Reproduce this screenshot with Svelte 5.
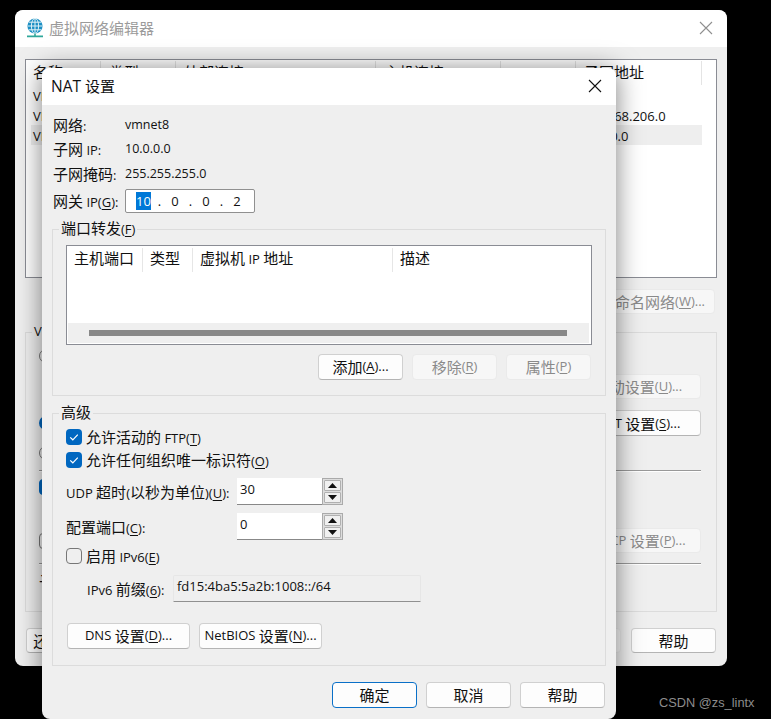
<script lang="ts">
  // "&X" marks the underlined access key. Chinese runs get a larger size than the Latin ones,
  // the way the Windows UI font pairing looks.
  function parts(text: string) {
    return text
      .split(/(&.|[\u4e00-\u9fff]+)/)
      .filter(Boolean)
      .map((t) => {
        if (t[0] === '&') return { t: t[1], k: 'lat mn' };
        return { t, k: /[\u4e00-\u9fff]/.test(t) ? 'cjk' : 'lat' };
      });
  }

  const networks = [
    { name: 'VMnet0', type: '桥接模式', ext: '自动桥接', host: '-', dhcp: '-', subnet: '-' },
    { name: 'VMnet1', type: '仅主机模式', ext: '-', host: '已连接', dhcp: '已启用', subnet: '192.168.206.0' },
    { name: 'VMnet8', type: 'NAT 模式', ext: 'NAT 模式', host: '已连接', dhcp: '已启用', subnet: '10.0.0.0' }
  ];
  const portCols = ['主机端口', '类型', '虚拟机 IP 地址', '描述'];
  const listCols = ['名称', '类型', '外部连接', '主机连接', 'DHCP', '子网地址'];
</script>

{#snippet txt(s: string)}{#each parts(s) as p}<span class={p.k}>{p.t}</span>{/each}{/snippet}

{#snippet check(on: boolean, label: string)}
  <div class="checkrow">
    <span class="box" class:on>
      {#if on}
        <svg viewBox="0 0 16 16" width="16" height="16"><path d="M4.2 8.4 6.8 10.8 11.8 5.6" fill="none" stroke="#fff" stroke-width="1.2" /></svg>
      {/if}
    </span>
    <span>{@render txt(label)}</span>
  </div>
{/snippet}

{#snippet spinner(value: string)}
  <div class="spin">
    <div class="spinval lat">{value}</div>
    <div class="spinbtns">
      <span class="arrow"><svg viewBox="0 0 9 5" width="9" height="5"><path d="M4.5 0 9 5H0z" fill="#111" /></svg></span>
      <span class="arrow"><svg viewBox="0 0 9 5" width="9" height="5"><path d="M0 0H9L4.5 5z" fill="#111" /></svg></span>
    </div>
  </div>
{/snippet}

{#snippet closeX(color: string)}
  <svg viewBox="0 0 14 14" width="14" height="14"><path d="M1 1 13 13M13 1 1 13" stroke={color} stroke-width="1.1" fill="none" /></svg>
{/snippet}

<div class="desk">
  <!-- the editor window behind the dialog -->
  <section class="win back">
    <header class="title">
      <svg class="globe" viewBox="0 0 18 20" width="18" height="20">
        <circle cx="9" cy="8" r="7.6" fill="#1c8fc4" />
        <path d="M1.6 8H16.4M2.8 4.2H15.2M2.8 11.8H15.2M9 .4V15.6" stroke="#dff1f6" stroke-width="1" fill="none" />
        <ellipse cx="9" cy="8" rx="3.6" ry="7.6" stroke="#dff1f6" stroke-width="1" fill="none" />
        <path d="M9 15.5V18M1 18.4H17" stroke="#2fa79a" stroke-width="1.6" fill="none" />
      </svg>
      <span class="backtitle">虚拟网络编辑器</span>
      <span class="x">{@render closeX('#8f8f8f')}</span>
    </header>
    <div class="backbody">
      <div class="netlist">
        <div class="netrow nethead">
          {#each listCols as c}<span>{@render txt(c)}</span>{/each}
        </div>
        {#each networks as n, i}
          <div class="netrow" class:sel={i === 2}>
            <span class="lat">{n.name}</span>
            <span>{@render txt(n.type)}</span>
            <span>{@render txt(n.ext)}</span>
            <span>{@render txt(n.host)}</span>
            <span>{@render txt(n.dhcp)}</span>
            <span class="lat">{n.subnet}</span>
          </div>
        {/each}
      </div>
      <div class="btnrow rename">
        <button class="btn off wide h25">{@render txt('重命名网络(&W)...')}</button>
      </div>
      <fieldset class="group vminfo">
        <legend>{@render txt('VMnet 信息')}</legend>
        <div class="vrow r1"><i class="radio"></i></div>
        <div class="vrow r2"><button class="btn off wide h25">{@render txt('自动设置(&U)...')}</button></div>
        <div class="vrow r3"><i class="radio on"></i><button class="btn wide">{@render txt('NAT 设置(&S)...')}</button></div>
        <div class="vrow r4"><i class="radio"></i></div>
        <div class="vline"></div>
        <div class="vrow r5"><i class="mini on"></i></div>
        <div class="vrow r6"><i class="mini"></i><button class="btn off wide h25">{@render txt('DHCP 设置(&P)...')}</button></div>
        <div class="vline l2"></div>
        <div class="vrow r7">{@render txt('子网')}</div>
      </fieldset>
      <div class="backfoot">
        <button class="btn">{@render txt('还原默认设置(&R)')}</button>
        <button class="btn off push">{@render txt('应用(&A)')}</button>
        <button class="btn">{@render txt('帮助')}</button>
      </div>
    </div>
  </section>

  <!-- NAT dialog on top -->
  <section class="win front">
    <header class="title dtitle">
      <span>{@render txt('NAT 设置')}</span>
      <span class="x dx">{@render closeX('#111')}</span>
    </header>
    <div class="body">
      <dl class="info">
        <dt>{@render txt('网络:')}</dt>
        <dd>vmnet8</dd>
        <dt>{@render txt('子网 IP:')}</dt>
        <dd>10.0.0.0</dd>
        <dt>{@render txt('子网掩码:')}</dt>
        <dd>255.255.255.0</dd>
      </dl>
      <div class="gateway">
        <span class="gwlabel">{@render txt('网关 IP(&G):')}</span>
        <div class="ipbox lat">
          <span class="seg hl">10</span><span class="dot">.</span>
          <span class="seg">0</span><span class="dot">.</span>
          <span class="seg">0</span><span class="dot">.</span>
          <span class="seg">2</span>
        </div>
      </div>

      <fieldset class="group ports">
        <legend>{@render txt('端口转发(&F)')}</legend>
        <div class="table">
          <div class="thead">
            {#each portCols as c}<span class="th">{@render txt(c)}</span>{/each}
          </div>
          <div class="tbody"></div>
          <div class="hscroll"><div class="thumb"></div></div>
        </div>
        <div class="btnrow portbtns">
          <button class="btn">{@render txt('添加(&A)...')}</button>
          <button class="btn off">{@render txt('移除(&R)')}</button>
          <button class="btn off">{@render txt('属性(&P)')}</button>
        </div>
      </fieldset>

      <fieldset class="group adv">
        <legend>{@render txt('高级')}</legend>
        <div class="checks">
          {@render check(true, '允许活动的 FTP(&T)')}
          {@render check(true, '允许任何组织唯一标识符(&O)')}
        </div>
        <div class="spinrow first">
          <span class="spinlabel">{@render txt('UDP 超时(以秒为单位)(&U):')}</span>
          {@render spinner('30')}
        </div>
        <div class="spinrow">
          <span class="spinlabel">{@render txt('配置端口(&C):')}</span>
          {@render spinner('0')}
        </div>
        <div class="v6check">{@render check(false, '启用 IPv6(&E)')}</div>
        <div class="prefix">
          <span class="prefixlabel">{@render txt('IPv6 前缀(&6):')}</span>
          <div class="prefixval lat">fd15:4ba5:5a2b:1008::/64</div>
        </div>
        <div class="advbtns">
          <button class="btn w123">{@render txt('DNS 设置(&D)...')}</button>
          <button class="btn w123">{@render txt('NetBIOS 设置(&N)...')}</button>
        </div>
      </fieldset>

      <div class="btnrow foot">
        <button class="btn primary">{@render txt('确定')}</button>
        <button class="btn">{@render txt('取消')}</button>
        <button class="btn">{@render txt('帮助')}</button>
      </div>
    </div>
  </section>

  <div class="mark">CSDN @zs_lintx</div>
</div>

<style>
  :global(body) {
    margin: 0;
    background: #000;
  }
  .desk {
    position: relative;
    width: 771px;
    height: 719px;
    overflow: hidden;
    background: #000;
    font-family: 'Open Sans', 'Noto Sans CJK SC', sans-serif;
    font-size: 13px;
    color: #111;
  }
  .lat {
    font-size: 13px;
    white-space: pre;
  }
  .mn {
    text-decoration: underline;
    text-underline-offset: 2px;
  }
  .cjk {
    font-family: 'Noto Sans CJK SC', sans-serif;
    font-size: 15px;
    font-weight: 400;
  }

  .win {
    position: absolute;
    display: flex;
    flex-direction: column;
    background: #efefef;
    border-radius: 8px;
    overflow: hidden;
  }
  .back {
    left: 15px;
    top: 10px;
    width: 712px;
    height: 656px;
  }
  .front {
    left: 42px;
    top: 68px;
    width: 574px;
    height: 651px;
    overflow: visible;
    box-shadow: 0 2px 26px rgba(0, 0, 0, 0.5);
  }
  .title {
    flex: none;
    height: 37px;
    box-sizing: border-box;
    padding: 0 0 2px 11px;
    display: flex;
    align-items: center;
    background: #fff;
    border-radius: 8px 8px 0 0;
  }
  .dtitle {
    padding-left: 9px;
    font-size: 15px;
  }
  .dtitle .lat {
    font-size: 15.5px;
  }
  .globe {
    margin-right: 5px;
  }
  .backtitle {
    font-family: 'Noto Sans CJK SC', sans-serif;
    font-size: 15px;
    color: #9b9b9b;
  }
  .x {
    margin-left: auto;
    margin-right: 14px;
    display: flex;
  }

  .backbody {
    flex: 1;
    display: flex;
    flex-direction: column;
    padding: 12px 10px 0;
  }
  .netlist {
    height: 219px;
    box-sizing: border-box;
    background: #fff;
    border: 1px solid #8a8c94;
    padding: 1px 14px 0 5px;
  }
  .netrow {
    display: grid;
    grid-template-columns: 70px 75px 200px 125px 75px 1fr;
    height: 20px;
    align-items: center;
  }
  .netrow > span {
    padding-left: 5px;
    white-space: nowrap;
  }
  .netrow > span:first-child {
    padding-left: 2px;
  }
  .nethead {
    height: 24px;
  }
  .nethead > span {
    height: 24px;
    padding-left: 8px;
    border-right: 1px solid #e4e4e4;
    line-height: 22px;
  }
  .netrow.sel {
    background: #eee;
  }
  .rename {
    margin-top: 11px;
    padding-right: 2px;
  }
  .group {
    margin: 0;
    padding: 0;
    min-width: 0;
    border: 1px solid #dcdcdc;
  }
  .group legend {
    margin-left: -7px;
    padding: 0 2px;
    line-height: 12px;
    height: 16px;
  }
  .vminfo {
    margin-top: 10px;
    height: 288px;
    box-sizing: border-box;
    padding: 0 15px 0 13px;
  }
  .vrow {
    display: flex;
    align-items: center;
    justify-content: space-between;
  }
  .vrow.r1 { height: 16px; margin-top: 8px; }
  .vrow.r2 { justify-content: flex-end; margin-top: 10px; }
  .vrow.r3 { margin-top: 11px; }
  .vrow.r4 { height: 16px; margin-top: 9px; }
  .vline {
    height: 1px;
    margin-top: 9px;
    background: #999;
    box-shadow: 0 1px 0 #fff;
  }
  .vline.l2 { margin-top: 10px; }
  .vrow.r5 { height: 16px; margin-top: 8px; }
  .vrow.r6 { margin-top: 33px; }
  .vrow.r7 { margin-top: 6px; }
  .radio {
    display: block;
    width: 14px;
    height: 14px;
    box-sizing: border-box;
    border: 1px solid #777;
    border-radius: 50%;
  }
  .radio.on {
    border: 4px solid #0067c0;
  }
  .mini {
    display: block;
    width: 16px;
    height: 16px;
    box-sizing: border-box;
    border: 1px solid #777;
    border-radius: 4px;
  }
  .mini.on {
    background: #0067c0;
    border-color: #0067c0;
  }
  .backfoot {
    margin-top: 16px;
    display: flex;
    gap: 10px;
    padding: 0 1px;
  }
  .backfoot .btn {
    width: 85px;
    height: 25px;
  }
  .backfoot .btn:first-child {
    width: 120px;
  }
  .backfoot .push {
    margin-left: auto;
  }

  .btn {
    box-sizing: border-box;
    width: 85px;
    height: 26px;
    padding: 0;
    background: #fdfdfd;
    border: 1px solid #d0d0d0;
    border-bottom-color: #b4b4b4;
    border-radius: 4px;
    color: #111;
    font: inherit;
    line-height: 1;
    white-space: nowrap;
    display: flex;
    align-items: center;
    justify-content: center;
  }
  .btn.off {
    background: #f7f7f7;
    border-color: #eaeaea;
    color: #8a8a8a;
  }
  .btn.primary {
    border: 1.5px solid #0a70c8;
  }
  .btn.wide {
    width: 125px;
  }
  .btn.h25 {
    height: 25px;
  }
  .btn.w123 {
    width: 123px;
  }
  .btnrow {
    display: flex;
    justify-content: flex-end;
    gap: 9px;
  }

  .body {
    flex: 1;
    display: flex;
    flex-direction: column;
    padding: 7px 10px 0;
  }
  .info {
    margin: 0 0 0 1px;
    display: grid;
    grid-template-columns: 72px 1fr;
    grid-auto-rows: 24.5px;
    align-items: center;
  }
  .info dd {
    margin: 0;
    font-size: 12.5px;
  }
  .gateway {
    display: flex;
    align-items: center;
    margin: 3px 0 0 1px;
  }
  .gwlabel {
    width: 72px;
  }
  .ipbox {
    box-sizing: border-box;
    width: 130px;
    height: 24px;
    display: flex;
    align-items: center;
    padding-left: 10px;
    background: #fff;
    border: 1px solid #909090;
    border-radius: 2px;
  }
  .seg {
    width: 16px;
    text-align: center;
  }
  .seg.hl {
    width: 15px;
    margin-right: 1px;
    background: #0078d7;
    color: #fff;
  }
  .dot {
    width: 15px;
    text-align: center;
  }
  .ports {
    margin-top: 9px;
    height: 174px;
    box-sizing: border-box;
    padding: 0 13px;
  }
  .table {
    height: 100px;
    box-sizing: border-box;
    display: flex;
    flex-direction: column;
    margin-top: 7px;
    background: #fff;
    border: 1px solid #8a8c94;
  }
  .thead {
    flex: none;
    display: grid;
    grid-template-columns: 76px 50px 200px 1fr;
    height: 24px;
    margin-top: 2px;
  }
  .th {
    padding-left: 7px;
    border-right: 1px solid #e6e6e6;
    line-height: 20px;
    white-space: nowrap;
  }
  .th:last-child {
    border-right: none;
  }
  .tbody {
    flex: 1;
  }
  .hscroll {
    flex: none;
    height: 20px;
    margin: 0 2px 1px 1px;
    background: #efefef;
    display: flex;
    align-items: center;
    padding: 0 22px 0 21px;
  }
  .thumb {
    flex: 1;
    height: 6px;
    background: #888;
  }
  .portbtns {
    margin-top: 9px;
    padding-right: 1px;
  }
  .adv {
    margin-top: 10px;
    height: 260px;
    box-sizing: border-box;
    padding: 0 13px;
  }
  .checks {
    display: flex;
    flex-direction: column;
    gap: 7px;
    margin-top: 7px;
  }
  .checkrow {
    display: flex;
    align-items: center;
    gap: 4px;
    height: 16px;
  }
  .box {
    flex: none;
    box-sizing: border-box;
    width: 16px;
    height: 16px;
    border: 1px solid #777;
    border-radius: 4px;
    overflow: hidden;
  }
  .box.on {
    border: none;
    background: #0067c0;
  }
  .box svg {
    display: block;
  }
  .spinrow {
    display: flex;
    align-items: center;
    margin-top: 8px;
  }
  .spinrow.first {
    margin-top: 10px;
  }
  .spinlabel {
    width: 171px;
    white-space: nowrap;
  }
  .spin {
    display: flex;
    height: 27px;
  }
  .spinval {
    box-sizing: border-box;
    width: 85px;
    padding: 0 0 0 3px;
    line-height: 22px;
    background: #fff;
    border-bottom: 1px solid #888;
  }
  .spinbtns {
    box-sizing: border-box;
    width: 21px;
    height: 27px;
    display: flex;
    flex-direction: column;
    gap: 1px;
    padding: 1px;
    border: 1px solid #aaa;
    background: #ddd;
  }
  .arrow {
    flex: 1;
    display: flex;
    align-items: center;
    justify-content: center;
    background: #f0f0f0;
    border: 1px solid #b0b0b0;
    border-radius: 1px;
  }
  .arrow svg {
    display: block;
  }
  .v6check {
    margin-top: 8px;
  }
  .prefix {
    display: flex;
    align-items: center;
    margin: 11px 0 0 21px;
  }
  .prefixlabel {
    width: 86px;
    white-space: nowrap;
  }
  .prefixval {
    box-sizing: border-box;
    width: 248px;
    height: 27px;
    padding-left: 3px;
    line-height: 20px;
    background: #efefef;
    border: 1px solid #e6e6e6;
    border-bottom-color: #909090;
    border-radius: 2px 2px 0 0;
  }
  .advbtns {
    display: flex;
    gap: 9px;
    margin: 21px 0 0 1px;
  }
  .foot {
    margin-top: 16px;
    padding-right: 1px;
  }
  .mark {
    position: absolute;
    left: 659px;
    top: 695px;
    font-family: 'Liberation Sans', sans-serif;
    font-size: 12.8px;
    color: #8d8d8d;
    white-space: nowrap;
  }
</style>
